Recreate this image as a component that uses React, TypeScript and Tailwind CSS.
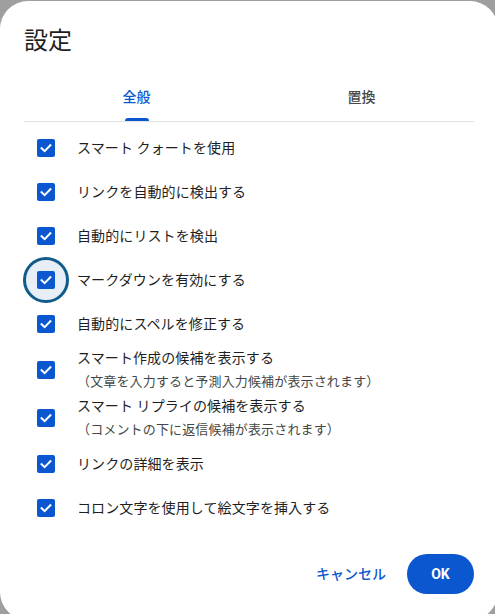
import React from "react";

type Option = {
  label: string;
  hint?: string;
  focused?: boolean;
};

const options: Option[] = [
  { label: "スマート クォートを使用" },
  { label: "リンクを自動的に検出する" },
  { label: "自動的にリストを検出" },
  { label: "マークダウンを有効にする", focused: true },
  { label: "自動的にスペルを修正する" },
  {
    label: "スマート作成の候補を表示する",
    hint: "（文章を入力すると予測入力候補が表示されます）",
  },
  {
    label: "スマート リプライの候補を表示する",
    hint: "（コメントの下に返信候補が表示されます）",
  },
  { label: "リンクの詳細を表示" },
  { label: "コロン文字を使用して絵文字を挿入する" },
];

function CheckBox({ focused }: { focused?: boolean }) {
  return (
    <div className="relative flex w-[44px] shrink-0 items-center justify-center">
      {/* focus ring around the active checkbox */}
      {focused && (
        <div className="absolute left-1/2 top-1/2 h-[46px] w-[46px] -translate-x-1/2 -translate-y-1/2 rounded-full border-[3px] border-[#0f5b8a] bg-[#e8eef8]" />
      )}
      <div className="relative flex h-[18px] w-[18px] items-center justify-center rounded-[2px] bg-[#0b57d0]">
        <svg width="14" height="14" viewBox="0 0 14 14" fill="none">
          <path
            d="M2.6 7.2 L5.6 10.1 L11.4 4.2"
            stroke="white"
            strokeWidth="2"
            strokeLinecap="square"
          />
        </svg>
      </div>
    </div>
  );
}

export default function App() {
  return (
    <div className="h-screen w-full overflow-hidden bg-[#9f9f9f] font-['Roboto','Noto_Sans_CJK_JP',sans-serif]">
      <div className="mt-px flex h-[619px] w-[498px] flex-col rounded-[28px] bg-white px-6 pt-6">
        {/* Title */}
        <h1 className="text-[24px] leading-8 text-[#1f1f1f]">設定</h1>

        {/* Tabs */}
        <div className="mt-4 flex border-b border-[#e3e3e3]">
          <div className="relative flex h-12 flex-1 items-center justify-center">
            <span className="text-[14px] font-medium text-[#0b57d0]">全般</span>
            <div className="absolute bottom-0 left-1/2 h-[3px] w-6 -translate-x-1/2 rounded-t-[3px] bg-[#0b57d0]" />
          </div>
          <div className="flex h-12 flex-1 items-center justify-center">
            <span className="text-[14px] font-medium text-[#444746]">置換</span>
          </div>
        </div>

        {/* Options */}
        <div className="mt-[4px] flex flex-col">
          {options.map((opt) => (
            <div
              key={opt.label}
              className={`flex items-center ${opt.hint ? "h-12" : "h-11"}`}
            >
              <CheckBox focused={opt.focused} />
              <div className="ml-[9px] flex flex-col">
                <span className="text-[14px] leading-6 tracking-[0.1px] text-[#1f1f1f]">
                  {opt.label}
                </span>
                {opt.hint && (
                  <span className="text-[13px] leading-6 tracking-[0.15px] text-[#444746]">
                    {opt.hint}
                  </span>
                )}
              </div>
            </div>
          ))}
        </div>

        {/* Actions */}
        <div className="mt-[24px] flex items-center justify-end gap-[9px]">
          <button className="h-10 px-3 text-[14px] font-medium text-[#0b57d0]">
            キャンセル
          </button>
          <button className="h-10 w-[67px] rounded-full bg-[#0b57d0] text-[14px] font-bold text-white">
            OK
          </button>
        </div>
      </div>
    </div>
  );
}
